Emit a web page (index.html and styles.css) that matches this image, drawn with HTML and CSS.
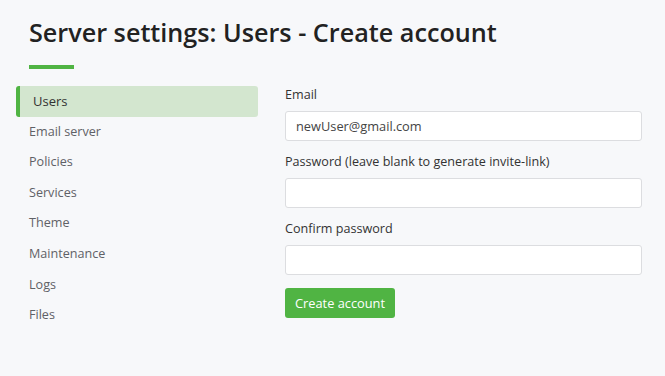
FILE: index.html
```html
<!DOCTYPE html>
<html>
<head>
<meta charset="utf-8">
<link rel="stylesheet" href="styles.css">
</head>
<body>
<div class="page">
  <header class="header">
    <h1 class="title">Server settings: Users - Create account</h1>
    <div class="title-bar"></div>
  </header>
  <div class="main">
    <nav class="sidebar">
      <a class="nav-item active">Users</a>
      <a class="nav-item">Email server</a>
      <a class="nav-item">Policies</a>
      <a class="nav-item">Services</a>
      <a class="nav-item">Theme</a>
      <a class="nav-item">Maintenance</a>
      <a class="nav-item">Logs</a>
      <a class="nav-item">Files</a>
    </nav>
    <form class="form">
      <label class="label">Email</label>
      <input class="input" type="text" value="newUser@gmail.com">
      <label class="label">Password (leave blank to generate invite-link)</label>
      <input class="input" type="password">
      <label class="label">Confirm password</label>
      <input class="input" type="password">
      <button class="btn" type="button">Create account</button>
    </form>
  </div>
</div>
</body>
</html>
```
FILE: styles.css
```css
* { box-sizing: border-box; }
html, body { margin: 0; padding: 0; background: #f7f8fa; }
body {
  font-family: "Open Sans", "Noto Sans", sans-serif;
  color: #333;
  width: 665px;
  height: 376px;
  overflow: hidden;
}
.page { padding: 14px 23px 0 16px; }
.header { padding-left: 13px; }
.title {
  margin: 0;
  font-size: 25.2px;
  font-weight: 600;
  color: #222;
  line-height: 36px;
}
.title-bar {
  margin-top: 15px;
  width: 45px;
  height: 4px;
  background: #50b443;
}
.main {
  display: flex;
  margin-top: 17px;
  gap: 27px;
}
.sidebar {
  width: 242px;
  display: flex;
  flex-direction: column;
}
.nav-item {
  display: block;
  height: 30.6px;
  line-height: 30px;
  padding-left: 13px;
  font-size: 12.6px;
  color: #5f6166;
  border-radius: 3px;
}
.nav-item.active {
  background: #d3e6cf;
  border-left: 4px solid #50b443;
  color: #333;
  font-size: 13px;
}
.form {
  flex: 1;
  display: flex;
  flex-direction: column;
  align-items: flex-start;
}
.label {
  font-size: 12.6px;
  line-height: 18px;
  color: #333;
  margin-bottom: 7px;
}
.input {
  width: 100%;
  height: 30px;
  border: 1px solid #dcdde0;
  border-radius: 3px;
  background: #fff;
  font-family: inherit;
  font-size: 12.8px;
  color: #444;
  padding: 0 10px;
  margin: 0 0 12px 0;
  outline: none;
}
.btn {
  margin-top: 1px;
  height: 30px;
  padding: 0 10px;
  background: #50b443;
  border: none;
  border-radius: 3px;
  color: #fff;
  font-family: inherit;
  font-size: 12.8px;
}
```
